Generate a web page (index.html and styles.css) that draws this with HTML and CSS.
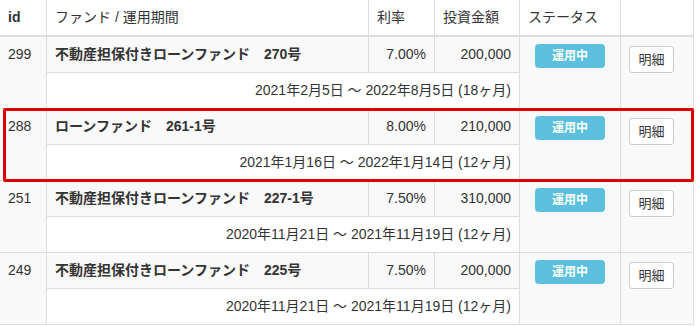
FILE: index.html
```html
<!DOCTYPE html>
<html lang="ja">
<head>
<meta charset="utf-8">
<title>ファンド一覧</title>
<link rel="stylesheet" href="styles.css">
</head>
<body>
<div class="wrap">
  <table class="funds">
    <colgroup>
      <col class="c-id"><col class="c-fund"><col class="c-rate"><col class="c-amt"><col class="c-status"><col class="c-btn">
    </colgroup>
    <thead>
      <tr>
        <th class="th-id">id</th>
        <th>ファンド / 運用期間</th>
        <th>利率</th>
        <th>投資金額</th>
        <th>ステータス</th>
        <th></th>
      </tr>
    </thead>
    <tbody>
      <tr class="main">
        <td rowspan="2" class="id">299</td>
        <td class="name">不動産担保付きローンファンド　270号</td>
        <td class="num">7.00%</td>
        <td class="num">200,000</td>
        <td rowspan="2" class="status"><span class="badge">運用中</span></td>
        <td rowspan="2" class="act"><button class="btn" type="button">明細</button></td>
      </tr>
      <tr class="period"><td colspan="3" class="num">2021年2月5日 ～ 2022年8月5日 (18ヶ月)</td></tr>

      <tr class="main">
        <td rowspan="2" class="id">288</td>
        <td class="name">ローンファンド　261-1号</td>
        <td class="num">8.00%</td>
        <td class="num">210,000</td>
        <td rowspan="2" class="status"><span class="badge">運用中</span></td>
        <td rowspan="2" class="act"><button class="btn" type="button">明細</button></td>
      </tr>
      <tr class="period"><td colspan="3" class="num">2021年1月16日 ～ 2022年1月14日 (12ヶ月)</td></tr>

      <tr class="main">
        <td rowspan="2" class="id">251</td>
        <td class="name">不動産担保付きローンファンド　227-1号</td>
        <td class="num">7.50%</td>
        <td class="num">310,000</td>
        <td rowspan="2" class="status"><span class="badge">運用中</span></td>
        <td rowspan="2" class="act"><button class="btn" type="button">明細</button></td>
      </tr>
      <tr class="period"><td colspan="3" class="num">2020年11月21日 ～ 2021年11月19日 (12ヶ月)</td></tr>

      <tr class="main">
        <td rowspan="2" class="id">249</td>
        <td class="name">不動産担保付きローンファンド　225号</td>
        <td class="num">7.50%</td>
        <td class="num">200,000</td>
        <td rowspan="2" class="status"><span class="badge">運用中</span></td>
        <td rowspan="2" class="act"><button class="btn" type="button">明細</button></td>
      </tr>
      <tr class="period"><td colspan="3" class="num">2020年11月21日 ～ 2021年11月19日 (12ヶ月)</td></tr>
    </tbody>
  </table>
  <div class="highlight"></div>
</div>
</body>
</html>
```

FILE: styles.css
```css
html, body {
  margin: 0;
  padding: 0;
  background: #fff;
}
body {
  font-family: "Liberation Sans", "Noto Sans CJK JP", sans-serif;
  font-size: 14px;
  line-height: 20px;
  color: #333;
}
.wrap {
  position: relative;
  width: 698px;
}
.funds {
  table-layout: fixed;
  border-collapse: separate;
  border-spacing: 0;
  width: 694px;
}
.c-id { width: 47px; }
.c-fund { width: 322px; }
.c-rate { width: 66px; }
.c-amt { width: 85px; }
.c-status { width: 101px; }
.c-btn { width: 73px; }

.funds th,
.funds td {
  box-sizing: border-box;
  padding: 7px 8px 8px;
  border-right: 1px solid #ddd;
  border-bottom: 1px solid #ddd;
  text-align: left;
  vertical-align: top;
  white-space: nowrap;
}
.funds th {
  height: 37px;
  padding: 7px 8px 8px;
  border-bottom: 2px solid #ddd;
  font-weight: normal;
  background: #fff;
}
.funds th.th-id { font-weight: bold; }

.funds td { height: 36px; }
.main td { background: #f9f9f9; }
.period td { background: #fff; }

.funds td.name { font-weight: bold; }
.funds td.num { text-align: right; }
.funds td.status { text-align: center; }
.funds td.act { padding-top: 9px; }

.badge {
  display: inline-block;
  width: 70px;
  height: 24px;
  line-height: 24px;
  border-radius: 4px;
  background: #5bc0de;
  color: #fff;
  font-size: 12px;
  font-weight: bold;
  text-align: center;
  vertical-align: top;
}
.btn {
  display: block;
  box-sizing: border-box;
  width: 45px;
  height: 27px;
  padding: 0;
  margin: 0;
  border: 1px solid #ccc;
  border-radius: 3px;
  background: #fff;
  color: #333;
  font-family: "Liberation Sans", "Noto Sans CJK JP", sans-serif;
  font-size: 13px;
  line-height: 25px;
  text-align: center;
}
.highlight {
  position: absolute;
  left: 3px;
  top: 108px;
  width: 691px;
  height: 74px;
  box-sizing: border-box;
  border: 3px solid #e00000;
  border-radius: 2px;
  pointer-events: none;
}
```
